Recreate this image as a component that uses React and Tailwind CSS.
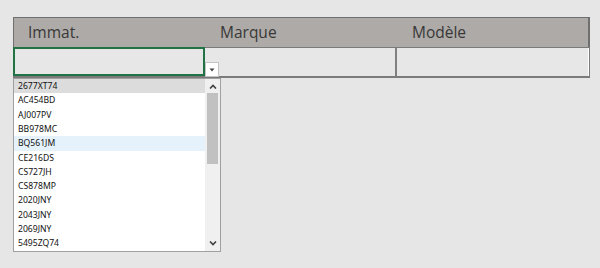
import React from 'react'

const plates = [
    '2677XT74', 'AC454BD', 'AJ007PV', 'BB978MC', 'BQ561JM', 'CE216DS',
    'CS727JH', 'CS878MP', '2020JNY', '2043JNY', '2069JNY', '5495ZQ74',
]

function Chevron({ up }) {
    return (
        <svg width="8" height="5" viewBox="0 0 8 5" className="block">
            <path d={up ? 'M1 4.5 L4 1.5 L7 4.5' : 'M1 0.5 L4 3.5 L7 0.5'} fill="none" stroke="#404040" strokeWidth="1.6" />
        </svg>
    )
}

export default function App() {
    return (
        <div className="w-[600px] h-[268px] bg-[#e6e6e6] pl-[13px] pt-[17px] overflow-hidden" style={{ fontFamily: '"Open Sans", "Noto Sans", sans-serif' }}>
            {/* Sheet table */}
            <div className="relative w-[577px]">
                <div className="grid grid-cols-[192px_192px_192px] h-[30px] bg-[#aeaaa7] border-t border-r border-l border-[#6f6f6f] border-r-2">
                    <div className="flex items-center pl-[14px] text-[15.5px] text-[#383838]">Immat.</div>
                    <div className="flex items-center pl-[14px] text-[15.5px] text-[#383838]">Marque</div>
                    <div className="flex items-center pl-[14px] text-[15.5px] text-[#383838]">Modèle</div>
                </div>
                <div className="grid grid-cols-[192px_192px_192px] h-[31px] bg-[#e7e7e7] border-t border-b-2 border-r-2 border-[#7b7b7b]">
                    <div className="border-2 border-[#217346] -mt-px"></div>
                    <div className="border-r-2 border-[#808080]"></div>
                    <div className="border-r border-white"></div>
                </div>

                {/* Validation dropdown button */}
                <div className="absolute left-[192px] top-[45px] w-[14px] h-[15px] bg-white border border-[#c4c4c4] flex items-center justify-center">
                    <svg width="6" height="4" viewBox="0 0 6 4"><path d="M0.5 0.5 L5.5 0.5 L3 3.5 Z" fill="#444" /></svg>
                </div>
            </div>

            {/* Dropdown list */}
            <div className="w-[208px] h-[174px] bg-white border border-[#a0a0a0] flex">
                <div className="flex-1 flex flex-col">
                    {plates.map((p, i) => (
                        <div
                            key={p}
                            className={
                                'h-[14.36px] flex items-center pl-[4px] text-[8.6px] text-[#111111] leading-none ' +
                                (i === 0 ? 'bg-[#dcdcdc]' : i === 4 ? 'bg-[#e5f1fb]' : '')
                            }
                            style={{ fontFamily: '"Noto Sans", "DejaVu Sans", sans-serif' }}
                        >
                            {p}
                        </div>
                    ))}
                </div>
                <div className="w-[15px] bg-[#f0f0f0] flex flex-col">
                    <div className="h-[14px] flex items-center justify-center"><Chevron up /></div>
                    <div className="h-[71px] mx-[2px] bg-[#c1c1c1]"></div>
                    <div className="flex-1"></div>
                    <div className="h-[16px] flex items-center justify-center"><Chevron /></div>
                </div>
            </div>
        </div>
    )
}
